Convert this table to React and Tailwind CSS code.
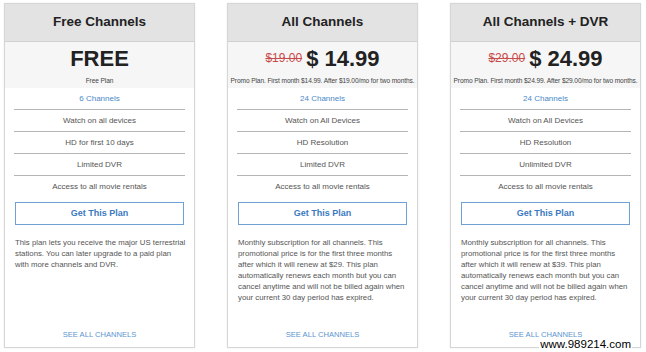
import React from 'react'

const plans = [
  {
    title: 'Free Channels',
    price: 'FREE',
    note: 'Free Plan',
    features: ['6 Channels', 'Watch on all devices', 'HD for first 10 days', 'Limited DVR', 'Access to all movie rentals'],
    desc: 'This plan lets you receive the major US terrestrial stations. You can later upgrade to a paid plan with more channels and DVR.',
  },
  {
    title: 'All Channels',
    old: '$19.00',
    price: '$ 14.99',
    note: 'Promo Plan. First month $14.99. After $19.00/mo for two months.',
    features: ['24 Channels', 'Watch on All Devices', 'HD Resolution', 'Limited DVR', 'Access to all movie rentals'],
    desc: 'Monthly subscription for all channels. This promotional price is for the first three months after which it will renew at $29. This plan automatically renews each month but you can cancel anytime and will not be billed again when your current 30 day period has expired.',
  },
  {
    title: 'All Channels + DVR',
    old: '$29.00',
    price: '$ 24.99',
    note: 'Promo Plan. First month $24.99. After $29.00/mo for two months.',
    features: ['24 Channels', 'Watch on All Devices', 'HD Resolution', 'Unlimited DVR', 'Access to all movie rentals'],
    desc: 'Monthly subscription for all channels. This promotional price is for the first three months after which it will renew at $39. This plan automatically renews each month but you can cancel anytime and will not be billed again when your current 30 day period has expired.',
  },
]

const PlanCard = ({ plan }) => (
  <div className="w-[191px] h-[345px] flex flex-col border border-[#d6d6d6] bg-white shadow-[0_0_2px_rgba(0,0,0,0.08)]">
    <div className="h-[38px] flex items-center justify-center bg-[#e3e3e3] border-b border-[#d0d0d0]">
      <h2 className="text-[13.5px] font-bold text-[#222]">{plan.title}</h2>
    </div>

    <div className="h-[46px] bg-[#f6f6f6] flex flex-col items-center pt-[5px]">
      <div className="flex items-end gap-[4px] h-[24px]">
        {plan.old && (
          <span className="text-[12px] text-[#c94a4a] line-through mb-[4px]">{plan.old}</span>
        )}
        <span className="text-[22px] leading-[24px] font-bold text-[#222]">{plan.price}</span>
      </div>
      <div className="text-[6.6px] text-[#444] mt-[5px] whitespace-nowrap tracking-[-0.1px]">{plan.note}</div>
    </div>

    <ul className="mx-[9px]">
      {plan.features.map((f, i) => (
        <li
          key={f}
          className={`h-[22px] flex items-center justify-center text-[8px] ${
            i === 0 ? 'text-[#4a89c8]' : 'text-[#555]'
          } ${i < plan.features.length - 1 ? 'border-b border-[#b5b5b5]' : ''}`}
        >
          {f}
        </li>
      ))}
    </ul>

    <button className="mx-[10px] mt-[4px] h-[23px] border border-[#6fa1d4] text-[9px] font-bold text-[#3b7abf] bg-white">
      Get This Plan
    </button>

    <p className="ml-[10px] mr-[8px] mt-[12px] text-[7.8px] leading-[11px] text-[#555] flex-1">{plan.desc}</p>

    <div className="pb-[7px] text-center text-[7.6px] text-[#5b94cf]">SEE ALL CHANNELS</div>
  </div>
)

export default function App() {
  return (
    <div
      className="relative w-[646px] h-[352px] bg-white overflow-hidden"
      style={{ fontFamily: '"Liberation Sans", Arial, sans-serif' }}
    >
      <div className="flex gap-[32px] pl-[4px] pt-[3px]">
        {plans.map((p) => (
          <PlanCard key={p.title} plan={p} />
        ))}
      </div>
      <span className="absolute right-[14px] bottom-[1px] bg-white text-[11.5px] leading-[13px] text-black px-[1px]">
        www.989214.com
      </span>
    </div>
  )
}
